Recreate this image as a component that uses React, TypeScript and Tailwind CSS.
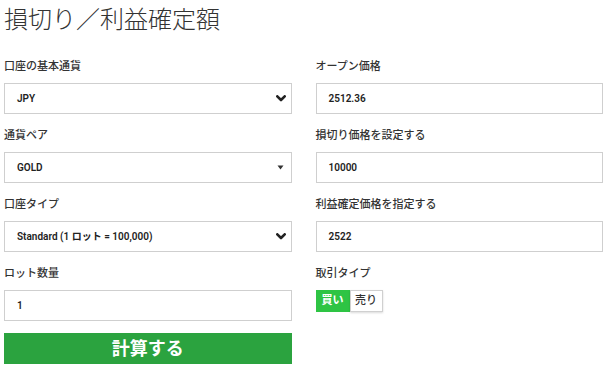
import React from "react";

const font = { fontFamily: 'Roboto, "Noto Sans CJK JP", sans-serif' };

function Chevron() {
  return (
    <svg width="10" height="7" viewBox="0 0 10 7" className="shrink-0">
      <path d="M1.3 1.3 L5 5 L8.7 1.3" fill="none" stroke="#222" strokeWidth="2.6" strokeLinecap="round" strokeLinejoin="round" />
    </svg>
  );
}

function Tri() {
  return (
    <svg width="7" height="5" viewBox="0 0 7 5" className="shrink-0">
      <path d="M0.5 0.5 L6.5 0.5 L3.5 4.5 Z" fill="#333" />
    </svg>
  );
}

function Field({ label, children }: { label: string; children: React.ReactNode }) {
  return (
    <div className="flex flex-col mb-[12px]">
      <div className="h-[20px] flex items-center text-[11px] font-medium text-[#333] mb-[6px]">{label}</div>
      {children}
    </div>
  );
}

function Box({ value, icon }: { value: string; icon?: React.ReactNode }) {
  return (
    <div className="h-[31px] border border-[#cfcfcf] bg-white flex items-center justify-between pl-[12px] pr-[5px]">
      <span className="text-[10px] font-semibold text-[#222]">{value}</span>
      {icon}
    </div>
  );
}

export default function App() {
  return (
    <div className="w-[613px] h-[370px] bg-white overflow-hidden" style={font}>
      <div className="pl-[4px] pt-[5px] h-[57px]">
        <h1 className="text-[24px] leading-[30px] font-light text-[#333]">損切り／利益確定額</h1>
      </div>
      <div className="grid grid-cols-2 gap-x-[24px] pl-[4px] pr-[10px]">
        <Field label="口座の基本通貨">
          <Box value="JPY" icon={<Chevron />} />
        </Field>
        <Field label="オープン価格">
          <Box value="2512.36" />
        </Field>
        <Field label="通貨ペア">
          <Box value="GOLD" icon={<span className="pr-[2px]"><Tri /></span>} />
        </Field>
        <Field label="損切り価格を設定する">
          <Box value="10000" />
        </Field>
        <Field label="口座タイプ">
          <Box value="Standard (1 ロット = 100,000)" icon={<Chevron />} />
        </Field>
        <Field label="利益確定価格を指定する">
          <Box value="2522" />
        </Field>
        <Field label="ロット数量">
          <Box value="1" />
        </Field>
        <Field label="取引タイプ">
          <div className="flex h-[22px]">
            <div className="w-[34px] h-full bg-[#2ec444] text-white text-[11px] font-bold flex items-center justify-center">買い</div>
            <div className="w-[33px] h-full bg-white border border-[#d0d0d0] shadow-[0_1px_2px_rgba(0,0,0,0.15)] text-[#333] text-[11px] font-medium flex items-center justify-center">売り</div>
          </div>
        </Field>
        <button className="h-[31px] bg-[#2ba33f] text-white text-[18px] font-bold flex items-center justify-center leading-none">
          計算する
        </button>
      </div>
    </div>
  );
}
